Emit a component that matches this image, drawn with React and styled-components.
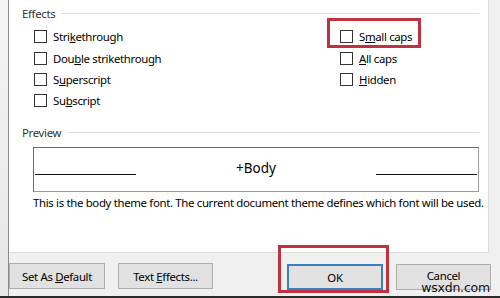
import React from "react";
import styled, { createGlobalStyle } from "styled-components";

const Global = createGlobalStyle`
  html, body { margin: 0; padding: 0; background: #f0f0f0; }
  body {
    font-family: "Noto Sans", "Open Sans", sans-serif;
    font-size: 11.4px;
    letter-spacing: -0.33px;
    color: #000;
  }
`;

const Frame = styled.div`
  width: 500px;
  height: 298px;
  display: flex;
  background: #f0f0f0;
  border-bottom: 2px solid #2a2a2a;
  box-sizing: border-box;
  overflow: hidden;
`;

const LeftEdge = styled.div`
  width: 8px;
  flex: none;
  background: linear-gradient(#f4f4f4, #e6e6e6);
  border-right: 1px solid #8a8a8a;
`;

const Main = styled.div`
  flex: 1;
  min-width: 0;
  display: flex;
  flex-direction: column;
`;

const Panel = styled.div`
  height: 253px;
  margin-right: 11px;
  background: #fff;
  border-right: 1px solid #dcdcdc;
  border-bottom: 1px solid #dcdcdc;
  box-sizing: border-box;
  padding: 6px 9px 0 13px;
`;

const GroupHead = styled.div`
  display: flex;
  align-items: center;
  gap: 6px;
  height: 14px;
  color: #333;
  &::after {
    content: "";
    flex: 1;
    height: 1px;
    background: #dcdcdc;
  }
`;

const Effects = styled.div`
  display: grid;
  grid-template-columns: 306px 1fr;
  padding: 6px 0 0 12px;
`;

const Column = styled.div`
  display: flex;
  flex-direction: column;
`;

const Row = styled.label`
  position: relative;
  display: flex;
  align-items: center;
  gap: 6px;
  height: 21.4px;
  width: max-content;
`;

const Box = styled.span`
  width: 13px;
  height: 13px;
  box-sizing: border-box;
  border: 1px solid #333;
  background: #fff;
  flex: none;
`;

const Highlight = styled.span`
  position: absolute;
  left: -13px;
  right: -9px;
  top: -8px;
  bottom: -1px;
  border: 3px solid #c1323e;
  pointer-events: none;
`;

const PreviewHead = styled(GroupHead)`
  margin-top: 14px;
`;

const PreviewBox = styled.div`
  margin: 7px 0 0 11px;
  height: 45px;
  box-sizing: border-box;
  border: 1px solid #6a6a6a;
  border-right-color: #9a9a9a;
  border-bottom-color: #9a9a9a;
  display: grid;
  grid-template-columns: 101px 1fr 101px;
  align-items: center;
  padding: 0 1px;
`;

const Rule = styled.span`
  height: 1px;
  background: #111;
  margin-top: 10px;
`;

const Sample = styled.span`
  text-align: center;
  font-size: 13.5px;
  letter-spacing: 0;
  margin-top: -2px;
`;

const Note = styled.div`
  margin: 3px 0 0 11px;
  white-space: nowrap;
`;

const ButtonBar = styled.div`
  position: relative;
  display: flex;
  align-items: flex-start;
  padding-top: 10px;
`;

const Button = styled.button`
  position: relative;
  flex: none;
  width: ${(p) => p.$w || 96}px;
  height: 26px;
  margin-left: ${(p) => p.$ml || 0}px;
  margin-top: ${(p) => p.$mt || 0}px;
  box-sizing: border-box;
  background: #e1e1e1;
  border: ${(p) => (p.$primary ? "2px solid #3b7fbf" : "1px solid #adadad")};
  font-family: inherit;
  font-size: inherit;
  letter-spacing: inherit;
  color: #000;
  padding: 0 0 ${(p) => p.$raise || 0}px;
`;

const OkHighlight = styled.span`
  position: absolute;
  left: -11px;
  right: -8px;
  top: -21px;
  bottom: -5px;
  border: 3px solid #c1323e;
  pointer-events: none;
`;

const Watermark = styled.span`
  position: absolute;
  right: 10px;
  top: 28px;
  line-height: 14px;
  font-family: "DejaVu Sans", sans-serif;
  font-size: 12.5px;
  letter-spacing: -0.2px;
  color: #111;
`;

function Check({ children, marked }) {
  return (
    <Row>
      <Box />
      <span>{children}</span>
      {marked && <Highlight />}
    </Row>
  );
}

export default function App() {
  return (
    <>
      <Global />
      <Frame>
        <LeftEdge />
        <Main>
          <Panel>
            <GroupHead>Effects</GroupHead>
            <Effects>
              <Column>
                <Check>Stri<u>k</u>ethrough</Check>
                <Check>Dou<u>b</u>le strikethrough</Check>
                <Check>S<u>u</u>perscript</Check>
                <Check>Su<u>b</u>script</Check>
              </Column>
              <Column>
                <Check marked>S<u>m</u>all caps</Check>
                <Check><u>A</u>ll caps</Check>
                <Check><u>H</u>idden</Check>
              </Column>
            </Effects>
            <PreviewHead>Preview</PreviewHead>
            <PreviewBox>
              <Rule />
              <Sample>+Body</Sample>
              <Rule />
            </PreviewBox>
            <Note>This is the body theme font. The current document theme defines which font will be used.</Note>
          </Panel>
          <ButtonBar>
            <Button $w={96}>Set As <u>D</u>efault</Button>
            <Button $w={95} $ml={13}>Text <u>E</u>ffects...</Button>
            <Button $w={96} $ml={74} $mt={1} $primary>
              OK
              <OkHighlight />
            </Button>
            <Button $w={95} $ml={13} $mt={1} $raise={4}>Cancel</Button>
            <Watermark>wsxdn.com</Watermark>
          </ButtonBar>
        </Main>
      </Frame>
    </>
  );
}
